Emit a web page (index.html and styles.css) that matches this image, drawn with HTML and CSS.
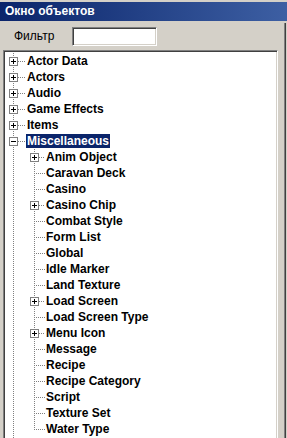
FILE: index.html
```
<!DOCTYPE html>
<html>
<link rel="stylesheet" href="styles.css">

<head>
    <title>Окно объектов</title>
</head>

<body>

    <div class="Window">
        <div class="TitleBar">Окно объектов</div>

        <div class="Main">
            <div class="LeftColumn">
                <div class="FilterRow">
                    <label for="Filter" class="FilterLabel">Фильтр</label>
                    <input type="text" id="Filter" class="FilterInput">
                </div>

                <div class="Tree">
                    <ul class="Level0">
                        <li><span class="Row"><span class="Toggle"></span><span class="Stub"></span><span class="Label">Actor Data</span></span></li>
                        <li><span class="Row"><span class="Toggle"></span><span class="Stub"></span><span class="Label">Actors</span></span></li>
                        <li><span class="Row"><span class="Toggle"></span><span class="Stub"></span><span class="Label">Audio</span></span></li>
                        <li><span class="Row"><span class="Toggle"></span><span class="Stub"></span><span class="Label">Game Effects</span></span></li>
                        <li><span class="Row"><span class="Toggle"></span><span class="Stub"></span><span class="Label">Items</span></span></li>
                        <li class="Selected">
                            <span class="Row"><span class="Toggle Open"></span><span class="Stub"></span><span class="Label">Miscellaneous</span></span>
                            <ul class="Level1">
                                <li><span class="Row"><span class="Toggle"></span><span class="Stub"></span><span class="Label">Anim Object</span></span></li>
                                <li class="Leaf"><span class="Row"><span class="Stub"></span><span class="Label">Caravan Deck</span></span></li>
                                <li class="Leaf"><span class="Row"><span class="Stub"></span><span class="Label">Casino</span></span></li>
                                <li><span class="Row"><span class="Toggle"></span><span class="Stub"></span><span class="Label">Casino Chip</span></span></li>
                                <li class="Leaf"><span class="Row"><span class="Stub"></span><span class="Label">Combat Style</span></span></li>
                                <li class="Leaf"><span class="Row"><span class="Stub"></span><span class="Label">Form List</span></span></li>
                                <li class="Leaf"><span class="Row"><span class="Stub"></span><span class="Label">Global</span></span></li>
                                <li class="Leaf"><span class="Row"><span class="Stub"></span><span class="Label">Idle Marker</span></span></li>
                                <li class="Leaf"><span class="Row"><span class="Stub"></span><span class="Label">Land Texture</span></span></li>
                                <li><span class="Row"><span class="Toggle"></span><span class="Stub"></span><span class="Label">Load Screen</span></span></li>
                                <li class="Leaf"><span class="Row"><span class="Stub"></span><span class="Label">Load Screen Type</span></span></li>
                                <li><span class="Row"><span class="Toggle"></span><span class="Stub"></span><span class="Label">Menu Icon</span></span></li>
                                <li class="Leaf"><span class="Row"><span class="Stub"></span><span class="Label">Message</span></span></li>
                                <li class="Leaf"><span class="Row"><span class="Stub"></span><span class="Label">Recipe</span></span></li>
                                <li class="Leaf"><span class="Row"><span class="Stub"></span><span class="Label">Recipe Category</span></span></li>
                                <li class="Leaf"><span class="Row"><span class="Stub"></span><span class="Label">Script</span></span></li>
                                <li class="Leaf"><span class="Row"><span class="Stub"></span><span class="Label">Texture Set</span></span></li>
                                <li class="Leaf"><span class="Row"><span class="Stub"></span><span class="Label">Water Type</span></span></li>
                            </ul>
                        </li>
                    </ul>
                </div>
            </div>

            <div class="Splitter"></div>
        </div>
    </div>

</body>
</html>
```

FILE: styles.css
```
body {
    margin: 0;
    height: 438px;
    overflow: hidden;
    background: #d4d0c8;
    font-family: 'Liberation Sans', Arial, sans-serif;
}

.Window {
    display: flex;
    flex-direction: column;
    height: 438px;
}

.TitleBar {
    margin-top: 2px;
    height: 19px;
    padding-left: 5px;
    background: linear-gradient(to right, #0a246a, #3d5fa3);
    color: #fff;
    font-weight: bold;
    font-size: 12px;
    line-height: 19px;
}

.Main {
    display: flex;
    flex: 1;
    min-height: 0;
}

.LeftColumn {
    display: flex;
    flex-direction: column;
    width: 284px;
}

.Splitter {
    width: 2px;
    margin-top: 2px;
    box-sizing: border-box;
    border-left: 1px solid #808080;
    border-right: 1px solid #404040;
}

.FilterRow {
    display: flex;
    align-items: center;
    height: 29px;
    padding-left: 14px;
}

.FilterLabel {
    width: 58px;
    font-size: 12px;
    color: #000;
}

.FilterInput {
    width: 85px;
    height: 19px;
    margin: 1px 0 0 0;
    padding: 0;
    box-sizing: border-box;
    background: #fff;
    border: 1px solid;
    border-color: #808080 #fff #fff #808080;
    box-shadow: inset 1px 1px #404040, inset -1px -1px #d4d0c8;
    outline: none;
}

.Tree {
    flex: 1;
    margin-left: 3px;
    width: 275px;
    box-sizing: border-box;
    background: #fff;
    border: 1px solid;
    border-bottom: none;
    border-color: #808080 #fff #fff #808080;
    box-shadow: inset 1px 1px #404040, inset -1px 0 #d4d0c8;
    padding: 2px 1px 0 1px;
    overflow: hidden;
}

.Tree ul {
    list-style: none;
    margin: 0;
    padding: 0;
}

/* dotted tree lines */
.Level0 {
    min-height: 100%;
    background: repeating-linear-gradient(#808080 0 1px, transparent 1px 2px) 8px 0 / 1px 100% no-repeat;
}

.Level1 {
    background: repeating-linear-gradient(#808080 0 1px, transparent 1px 2px) 29px 0 / 1px calc(100% - 8px) no-repeat;
}

.Row {
    display: flex;
    align-items: center;
    height: 16px;
}

.Toggle {
    flex: none;
    width: 9px;
    height: 9px;
    margin-left: 4px;
    box-sizing: border-box;
    border: 1px solid #808080;
    background:
        linear-gradient(#000, #000) center / 5px 1px no-repeat,
        linear-gradient(#000, #000) center / 1px 5px no-repeat,
        #fff;
}

.Toggle.Open {
    background:
        linear-gradient(#000, #000) center / 5px 1px no-repeat,
        #fff;
}

.Stub {
    flex: none;
    width: 8px;
    height: 1px;
    background: repeating-linear-gradient(to right, #808080 0 1px, transparent 1px 2px);
}

.Level1 .Toggle {
    margin-left: 25px;
}

.Level1 .Toggle + .Stub {
    width: 6px;
}

.Leaf .Stub {
    margin-left: 29px;
    width: 11px;
}

.Label {
    padding: 0 1px;
    font-weight: bold;
    font-size: 12px;
    line-height: 14px;
    color: #000;
    white-space: nowrap;
}

.Selected > .Row .Label {
    background: #0a246a;
    color: #fff;
}
```
